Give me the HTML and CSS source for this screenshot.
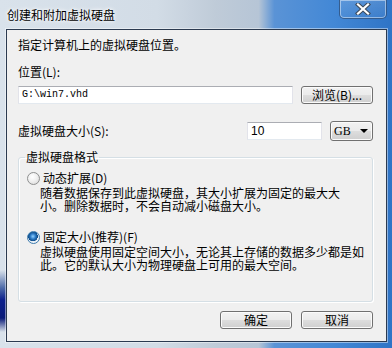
FILE: index.html
```html
<!DOCTYPE html>
<html lang="zh-CN">
<head>
    <meta charset="UTF-8">
    <title>创建和附加虚拟硬盘</title>
    <link rel="stylesheet" href="styles.css">
</head>
<body>
    <div class="window">
        <div class="titlebar">
            <span class="title">创建和附加虚拟硬盘</span>
            <div class="close">
                <svg width="16" height="12" viewBox="0 0 16 12">
                    <path d="M3 1.5 L13 10.5 M13 1.5 L3 10.5" stroke="#3b4a5c" stroke-width="4.2" stroke-linecap="square"/>
                    <path d="M3 1.5 L13 10.5 M13 1.5 L3 10.5" stroke="#fff" stroke-width="2.2" stroke-linecap="square"/>
                </svg>
            </div>
        </div>
        <div class="client">
            <p class="intro">指定计算机上的虚拟硬盘位置。</p>
            <div class="field-label">位置(L):</div>
            <div class="row">
                <div class="textbox path">G:\win7.vhd</div>
                <div class="btn browse">浏览(B)...</div>
            </div>
            <div class="row size-row">
                <span class="size-label">虚拟硬盘大小(S):</span>
                <div class="textbox size">10</div>
                <div class="combo">GB<span class="arrow"></span></div>
            </div>
            <fieldset class="group">
                <legend>虚拟硬盘格式</legend>
                <div class="option"><span class="radio"></span>动态扩展(D)</div>
                <p class="desc">随着数据保存到此虚拟硬盘，其大小扩展为固定的最大大<br>小。删除数据时，不会自动减小磁盘大小。</p>
                <div class="option second"><span class="radio checked"></span>固定大小(推荐)(F)</div>
                <p class="desc">虚拟硬盘使用固定空间大小，无论其上存储的数据多少都是如<br>此。它的默认大小为物理硬盘上可用的最大空间。</p>
            </fieldset>
            <div class="actions">
                <div class="btn">确定</div>
                <div class="btn">取消</div>
            </div>
        </div>
    </div>
</body>
</html>
```

FILE: styles.css
```css
*{
    margin: 0;
    padding: 0;
    box-sizing: border-box;
}
body{
    width: 392px;
    height: 348px;
    overflow: hidden;
    font-family: "Noto Sans CJK SC", "Liberation Sans", sans-serif;
    font-size: 12px;
    color: #000;
}
.window{
    width: 392px;
    height: 348px;
    display: flex;
    flex-direction: column;
    background:
        linear-gradient(to bottom, rgba(255,255,255,0) 270px, #4d6aa8 288px, #0c1f8c 300px, #0a1a78 318px, rgba(255,255,255,0) 332px) left top / 6px 348px no-repeat,
        linear-gradient(to right, #d9e2eb 0%, #d2dce6 40%, #bfcbd8 55%, #b6c5d6 66%, #5a93d6 70%, #4388d6 85%, #2f74c6 100%);
}
/* 标题栏 */
.titlebar{
    height: 29px;
    display: flex;
    justify-content: space-between;
    align-items: flex-start;
    padding: 0 5px 0 7px;
}
.title{
    margin-top: 7px;
    line-height: 15px;
    text-shadow: 0 0 5px #fff, 0 0 3px #fff;
}
.close{
    width: 48px;
    height: 19px;
    border: 1px solid rgba(40,70,110,0.7);
    border-top: none;
    border-radius: 0 0 5px 5px;
    box-shadow: inset 0 0 0 1px rgba(255,255,255,0.45);
    background: linear-gradient(rgba(255,255,255,0.15), rgba(255,255,255,0.05));
    display: flex;
    justify-content: center;
    align-items: center;
}
/* 内容区 */
.client{
    height: 313px;
    margin: 0 5px 0 6px;
    border: 1px solid #2b3a50;
    box-shadow: 0 0 0 1px rgba(255,255,255,0.45);
    background: #f0f0f0;
    padding: 8px 13px 0 11px;
}
.intro{
    line-height: 14px;
}
.field-label{
    line-height: 14px;
    margin-top: 13px;
}
.row{
    display: flex;
    gap: 8px;
    margin-top: 7px;
}
.textbox{
    height: 18px;
    background: #fff;
    border: 1px solid #e2e3ea;
    border-top-color: #abadb3;
    border-bottom-color: #e3e9ef;
    line-height: 16px;
    padding-left: 3px;
}
.path{
    flex: 1;
    font-family: "Liberation Mono", monospace;
    font-size: 10px;
}
.btn{
    width: 72px;
    height: 18px;
    border: 1px solid #707070;
    border-radius: 3px;
    background: linear-gradient(#f2f2f2 0%, #ebebeb 48%, #dddddd 52%, #cfcfcf 100%);
    box-shadow: inset 0 0 0 1px #fbfbfb;
    text-align: center;
    line-height: 16px;
}
.size-row{
    margin-top: 17px;
    align-items: center;
}
.size-label{
    flex: 1;
    line-height: 14px;
}
.size{
    width: 75px;
    font-family: "Liberation Sans", sans-serif;
}
.combo{
    width: 43px;
    height: 20px;
    border: 1px solid #707070;
    border-radius: 3px;
    background: linear-gradient(#f2f2f2 0%, #ebebeb 48%, #dddddd 52%, #cfcfcf 100%);
    box-shadow: inset 0 0 0 1px #fbfbfb;
    font-family: "Liberation Serif", serif;
    font-size: 12px;
    line-height: 18px;
    padding-left: 3px;
    display: flex;
    justify-content: space-between;
    align-items: center;
    padding-right: 4px;
}
.arrow{
    width: 0;
    height: 0;
    border-left: 4px solid transparent;
    border-right: 4px solid transparent;
    border-top: 4px solid #000;
}
/* 分组框 */
.group{
    margin-top: 9px;
    height: 152px;
    border: 1px solid #d5dfe5;
    border-radius: 3px;
    box-shadow: inset 1px 1px 0 #fff, 1px 1px 0 #fff;
    padding: 7px 8px 0 6px;
}
.group legend{
    padding: 0 1px;
    line-height: 14px;
}
.option{
    display: flex;
    align-items: center;
    line-height: 14px;
    margin-left: 2px;
}
.option.second{
    margin-top: 18px;
}
.radio{
    width: 13px;
    height: 13px;
    border-radius: 50%;
    border: 1px solid #8e8f8f;
    background: radial-gradient(circle at 40% 35%, #fff 0%, #f0f0f0 45%, #d4d4d4 100%);
    margin-right: 3px;
}
.radio.checked{
    border-color: #3d7bad;
    background: radial-gradient(circle at 45% 40%, #8fd0ff 0%, #2b79c4 30%, #0d4a86 52%, #e6eef5 56%, #fbfbfb 100%);
}
.desc{
    margin: 1px 0 0 15px;
    line-height: 13px;
}
.actions{
    display: flex;
    justify-content: flex-end;
    gap: 9px;
    margin-top: 9px;
}
```
